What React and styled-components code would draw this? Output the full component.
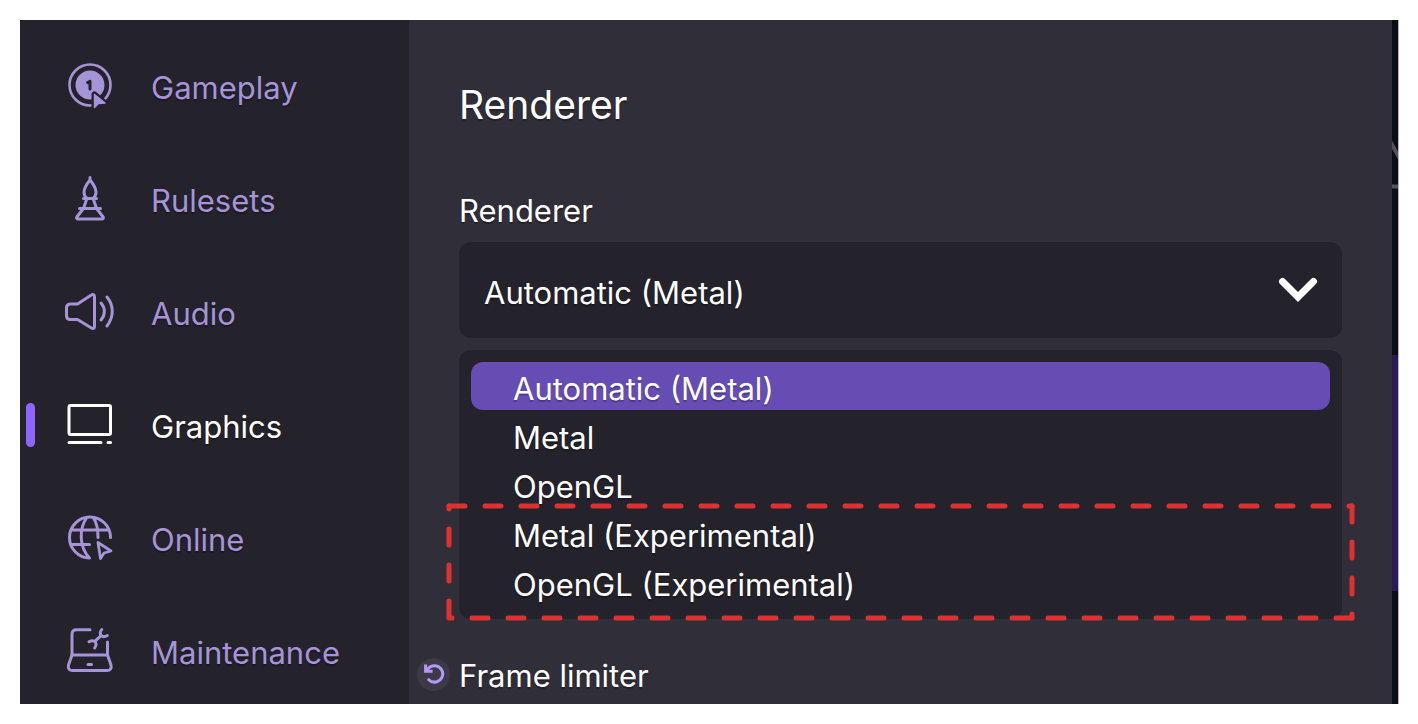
import React, { useState } from "react";
import styled, { createGlobalStyle } from "styled-components";

const GlobalStyle = createGlobalStyle`
  * { box-sizing: border-box; }
  body {
    margin: 0;
    background: #ffffff;
    font-family: Inter, "Liberation Sans", sans-serif;
    color: #ffffff;
  }
  button, select { font: inherit; color: inherit; }
`;

const Page = styled.div`
  min-height: 100vh;
  padding: 20px 19px 20px 20px;
  display: flex;
`;

const Window = styled.div`
  flex: 1;
  min-width: 0;
  display: flex;
  background: #302e38;
`;

const Sidebar = styled.nav`
  flex: 0 0 389px;
  background: #24222a;
  padding: 36px 0 19px;
  display: flex;
  flex-direction: column;
  gap: 49px;
`;

const NavButton = styled.button`
  height: 64px;
  padding: 0 0 0 6px;
  border: 0;
  background: none;
  display: flex;
  align-items: center;
  text-align: left;
  font-size: 31px;
  line-height: 40px;
  cursor: pointer;
  color: ${(p) => (p.$active ? "#ffffff" : "#a594d8")};
  text-shadow: 0 2px 1px rgba(0, 0, 0, 0.25);
`;

const Marker = styled.span`
  width: 9px;
  height: 44px;
  border-radius: 5px;
  margin: 0 29px 5px 0;
  background: ${(p) => (p.$active ? "#8c66ff" : "transparent")};
`;

const NavIcon = styled.svg`
  width: 52px;
  height: 48px;
  margin: 0 35px 4px 0;
  fill: none;
  stroke: currentColor;
  stroke-width: 3;
  stroke-linecap: round;
  stroke-linejoin: round;
`;

const Content = styled.main`
  flex: 1;
  min-width: 0;
  padding: 63px 50px 8px;
  display: flex;
  flex-direction: column;
  text-shadow: 0 2px 1px rgba(0, 0, 0, 0.25);
`;

const Heading = styled.h1`
  margin: 0 0 64px;
  font-size: 39px;
  line-height: 44px;
  font-weight: 400;
`;

const Label = styled.label`
  font-size: 31px;
  line-height: 40px;
`;

const SelectBox = styled.div`
  margin: 11px 0 12px;
  height: 96px;
  border-radius: 12px;
  background: #24222a;
  display: grid;
  align-items: center;

  > * { grid-area: 1 / 1; }
`;

const Select = styled.select`
  appearance: none;
  width: 100%;
  height: 100%;
  border: 0;
  border-radius: 12px;
  padding: 4px 80px 0 25px;
  background: transparent;
  font-size: 31px;
  text-shadow: inherit;
  outline: none;

  option { background: #24222a; }
`;

const Chevron = styled.svg`
  justify-self: end;
  width: 40px;
  height: 26px;
  margin-right: 24px;
  fill: none;
  stroke: #ffffff;
  stroke-width: 7;
  stroke-linecap: round;
  stroke-linejoin: miter;
  pointer-events: none;
`;

const MenuArea = styled.div`
  position: relative;
`;

const Menu = styled.div`
  padding: 12px 12px 13px;
  border-radius: 12px;
  background: #24222a;
  display: flex;
  flex-direction: column;
  gap: 1px;
`;

const Option = styled.button`
  height: 48px;
  border: 0;
  border-radius: 12px;
  padding: 5px 42px 0;
  text-align: left;
  font-size: 31px;
  line-height: 40px;
  text-shadow: inherit;
  cursor: pointer;
  background: ${(p) => (p.$selected ? "#664db3" : "transparent")};
`;

const Callout = styled.svg`
  position: absolute;
  left: -13px;
  bottom: -2px;
  width: calc(100% + 26px);
  height: 118px;
  pointer-events: none;
  stroke: #e03131;
  stroke-width: 5;
  stroke-linecap: round;
  stroke-dasharray: 16 20;
`;

const LimiterRow = styled.div`
  margin: 37px 0 0 -42px;
  display: flex;
  align-items: center;
  gap: 9px;
`;

const ResetButton = styled.button`
  width: 33px;
  height: 33px;
  margin-bottom: 4px;
  padding: 0;
  border: 0;
  border-radius: 50%;
  background: #3d3946;
  display: grid;
  place-items: center;
  color: #b299ff;
  cursor: pointer;
`;

const Backdrop = styled.div`
  flex: 0 0 7px;
  display: flex;
  flex-direction: column;
  background: #080f15;
  border-right: 1px solid #b3b3b8;
`;

const BackdropArt = styled.svg`
  width: 6px;
  height: 335px;
  fill: none;
  stroke: #57515a;
  stroke-width: 4;
`;

const BackdropBand = styled.div`
  height: 236px;
  background: #2b1a55;
`;

const ICONS = {
  Gameplay: (
    <>
      <circle cx="26" cy="23" r="20.5" strokeWidth="2.6" />
      <circle cx="26" cy="23" r="14.5" fill="currentColor" stroke="none" />
      <path d="M23.6 20.6l2.4-1.400v7.800" stroke="#24222a" strokeWidth="3" />
      <path d="M30.500 32.500v13l4-4 6.500-.5z" fill="#24222a" stroke="#24222a" strokeWidth="6" />
      <path d="M30.500 32.500v13l4-4 6.500-.5z" fill="currentColor" strokeWidth="1.4" />
    </>
  ),
  Rulesets: (
    <>
      <path d="M26 2.500v2.500c-3.800 4.600-6 8.500-6 12.300 0 2.600 1 4.700 2.800 6.200h6.400c1.800-1.500 2.800-3.600 2.800-6.200 0-3.800-2.200-7.700-6-12.300" />
      <path d="M19.500 23.500h13M22.500 24.500l-3 9-6.700 8.500c-.6 1.200 0 2 1.200 2h24c1.200 0 1.800-.8 1.200-2l-6.700-8.500-3-9M15.500 33.500h21" />
    </>
  ),
  Audio: (
    <>
      <path d="M2.500 20c0-2.500 1.500-4 4-4h7L27 7.200c2-1.200 3.500-.6 3.500 1.400v29.800c0 2-1.500 2.600-3.500 1.400L13.500 31.500h-7c-2.500 0-4-1.500-4-4z" />
      <path d="M37 15c4.500 5 4.500 12 0 17M43 9c7 8.500 7 20 0 29" />
    </>
  ),
  Graphics: (
    <>
      <rect x="5" y="4.500" width="41.500" height="29" rx="1.500" />
      <path d="M5 41.500h32M44 41.500h2.500" />
    </>
  ),
  Online: (
    <>
      <path d="M46.500 23.500A20.500 20.500 0 1 0 25.500 44M22.500 4c-7.500 11-7.500 29 3 40M29.500 4c3.400 5 4.500 11 4.500 19.500M8 16h36.500M8 30.500h17.500" />
      <path d="M34 28.500l13 8.500-7 2-3.500 5.500z" strokeWidth="2.800" />
    </>
  ),
  Maintenance: (
    <>
      <path d="M8 28V7c0-3 1.500-4.300 4.500-4.300h13.500M43.500 15v13" />
      <path d="M8 28h35.500l3.500 10c.8 3.500-.8 5.500-4 5.500h-34.500c-3.200 0-4.800-2-4-5.500zM24 37.500h3.500" />
      <path d="M37.700 2.500c-2 2.800-1.800 4.600-.4 6s3.400 1.600 6 0M36.800 8.800L31 14.200M25 14.800c3-1.600 4.800-1.200 6 0s1.600 3.200-.3 6.200" />
    </>
  ),
};

const SECTIONS = ["Gameplay", "Rulesets", "Audio", "Graphics", "Online", "Maintenance"];
const RENDERERS = [
  "Automatic (Metal)",
  "Metal",
  "OpenGL",
  "Metal (Experimental)",
  "OpenGL (Experimental)",
];

export default function App() {
  const [section, setSection] = useState("Graphics");
  const [renderer, setRenderer] = useState(RENDERERS[0]);

  return (
    <>
      <GlobalStyle />
      <Page>
        <Window>
          <Sidebar aria-label="Settings">
            {SECTIONS.map((name) => (
              <NavButton
                key={name}
                type="button"
                $active={name === section}
                aria-current={name === section ? "page" : undefined}
                onClick={() => setSection(name)}
              >
                <Marker $active={name === section} />
                <NavIcon viewBox="0 0 52 48" aria-hidden="true">{ICONS[name]}</NavIcon>
                {name}
              </NavButton>
            ))}
          </Sidebar>
          <Content>
            <Heading>Renderer</Heading>
            <Label htmlFor="renderer">Renderer</Label>
            <SelectBox>
              <Select id="renderer" value={renderer} onChange={(e) => setRenderer(e.target.value)}>
                {RENDERERS.map((name) => (
                  <option key={name}>{name}</option>
                ))}
              </Select>
              <Chevron viewBox="0 0 40 26" aria-hidden="true">
                <path d="M4.500 4.500L20 20 35.500 4.500" />
              </Chevron>
            </SelectBox>
            <MenuArea>
              <Menu role="listbox" aria-label="Renderer">
                {RENDERERS.map((name) => (
                  <Option
                    key={name}
                    type="button"
                    role="option"
                    aria-selected={name === renderer}
                    $selected={name === renderer}
                    onClick={() => setRenderer(name)}
                  >
                    {name}
                  </Option>
                ))}
              </Menu>
              <Callout aria-hidden="true">
                <svg x="-3" width="100%" height="118" overflow="visible">
                  <line x1="6" y1="3" x2="100%" y2="3" />
                  <line x1="6" y1="115" x2="100%" y2="115" strokeDashoffset="13" />
                  <line x1="100%" y1="3" x2="100%" y2="115" />
                </svg>
                <line x1="3" y1="3" x2="3" y2="115" strokeDashoffset="13" />
              </Callout>
            </MenuArea>
            <LimiterRow>
              <ResetButton type="button" aria-label="Reset frame limiter">
                <svg width="22" height="22" viewBox="0 0 22 22" fill="none" stroke="currentColor" strokeWidth="3" aria-hidden="true">
                  <path d="M3.500 7.500C6 4 8.500 2.700 11.500 2.700a8.200 8.200 0 1 1-5.800 14" strokeLinecap="round" />
                  <path d="M2.600 1.500V8.300h7" />
                  <path d="M3 4l5 4.500H3z" fill="currentColor" stroke="none" />
                </svg>
              </ResetButton>
              <Label as="span">Frame limiter</Label>
            </LimiterRow>
          </Content>
          <Backdrop>
            <BackdropArt viewBox="0 0 6 335" aria-hidden="true">
              <path d="M-2 121L8 139M0 166.500H6" />
            </BackdropArt>
            <BackdropBand />
          </Backdrop>
        </Window>
      </Page>
    </>
  );
}
